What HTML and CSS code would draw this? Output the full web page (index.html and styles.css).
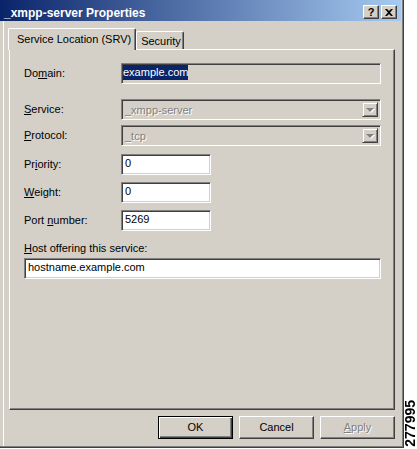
FILE: index.html
```html
<!DOCTYPE html>
<html>
<head>
<meta charset="utf-8">
<link rel="stylesheet" href="styles.css">
</head>
<body>
<div class="page">
  <div class="dialog">
    <div class="titlebar">
      <span class="title">_xmpp-server Properties</span>
      <div class="caption-btns">
        <span class="cbtn help">?</span>
        <span class="cbtn close">
          <svg width="8" height="7" viewBox="0 0 8 7"><path d="M0 0h2l2 2 2-2h2L5 3.5 8 7H6L4 5 2 7H0l3-3.5z" fill="#000"/></svg>
        </span>
      </div>
    </div>
    <div class="body">
      <div class="tabs">
        <div class="tab active">Service Location (SRV)</div>
        <div class="tab inactive">Security</div>
      </div>
      <div class="panel">
        <div class="row r-domain">
          <span class="label">Do<u>m</u>ain:</span>
          <div class="field wide readonly"><span class="sel">example.com</span></div>
        </div>
        <div class="row r-service">
          <span class="label"><u>S</u>ervice:</span>
          <div class="field wide combo disabled"><span class="ctext">_xmpp-server</span><span class="drop"><span class="arrow"></span></span></div>
        </div>
        <div class="row r-protocol">
          <span class="label"><u>P</u>rotocol:</span>
          <div class="field wide combo disabled"><span class="ctext">_tcp</span><span class="drop"><span class="arrow"></span></span></div>
        </div>
        <div class="row r-priority">
          <span class="label">Pr<u>i</u>ority:</span>
          <div class="field short edit">0</div>
        </div>
        <div class="row r-weight">
          <span class="label"><u>W</u>eight:</span>
          <div class="field short edit">0</div>
        </div>
        <div class="row r-port">
          <span class="label">Port <u>n</u>umber:</span>
          <div class="field short edit">5269</div>
        </div>
        <div class="host-label"><u>H</u>ost offering this service:</div>
        <div class="field host edit">hostname.example.com</div>
      </div>
      <div class="buttons">
        <div class="btn default">OK</div>
        <div class="btn">Cancel</div>
        <div class="btn disabled"><u>A</u>pply</div>
      </div>
    </div>
  </div>
  <div class="fignum"><span>277995</span></div>
</div>
</body>
</html>
```
FILE: styles.css
```css
html, body {
  margin: 0;
  background: #fff;
}
body {
  font-family: "Liberation Sans", Arial, sans-serif;
  font-size: 11px;
  color: #000;
}
.page {
  display: flex;
  width: 417px;
  height: 449px;
}
.dialog {
  width: 404px;
  height: 448px;
  box-sizing: border-box;
  background: #d4d0c8;
  display: flex;
  flex-direction: column;
  box-shadow: inset -1px -1px 0 #404040, inset -2px -2px 0 #808080, inset 3px 0 0 #d4d0c8, inset 4px 0 0 #fff;
}
.titlebar {
  height: 21px;
  margin-right: 3px;
  background: linear-gradient(to right, #0a246a, #a6caf0);
  display: flex;
  align-items: center;
  padding-left: 4px;
  box-sizing: border-box;
}
.title {
  color: #fff;
  font-weight: bold;
  font-size: 12px;
  line-height: 14px;
  padding-top: 5px;
}
.caption-btns {
  margin-left: auto;
  margin-right: 4px;
  display: flex;
  gap: 2px;
  padding-top: 3px;
}
.cbtn {
  width: 16px;
  height: 14px;
  box-sizing: border-box;
  background: #d4d0c8;
  border-top: 1px solid #fff;
  border-left: 1px solid #fff;
  border-right: 1px solid #404040;
  border-bottom: 1px solid #404040;
  box-shadow: inset -1px -1px 0 #808080;
  display: flex;
  align-items: center;
  justify-content: center;
  font-weight: bold;
  font-size: 11px;
  line-height: 12px;
}
.body {
  flex: 1;
  display: flex;
  flex-direction: column;
  padding: 0 9px;
}
.tabs {
  position: relative;
  z-index: 1;
  margin-top: 7px;
  margin-left: -1px;
  margin-bottom: -1px;
  height: 22px;
  display: flex;
  align-items: flex-end;
}
.tab {
  box-sizing: border-box;
  line-height: 13px;
  background: #d4d0c8;
  border-top: 1px solid #fff;
  border-left: 1px solid #fff;
  border-right: 1px solid #404040;
  box-shadow: inset -1px 0 0 #808080;
  border-radius: 2px 2px 0 0;
  white-space: nowrap;
}
.tab.active {
  height: 22px;
  padding: 4px 4px 0 8px;
}
.tab.inactive {
  height: 18px;
  padding: 3px 2px 0 4px;
  margin-bottom: 1px;
}
.panel {
  height: 361px;
  box-sizing: border-box;
  border-top: 1px solid #fff;
  border-left: 1px solid #fff;
  border-right: 1px solid #404040;
  border-bottom: 1px solid #404040;
  box-shadow: inset -1px -1px 0 #808080;
  padding-left: 14px;
  display: flex;
  flex-direction: column;
}
.row {
  display: flex;
  align-items: center;
  height: 21px;
}
.r-domain { margin-top: 13px; }
.r-service { margin-top: 15px; }
.r-protocol { margin-top: 5px; }
.r-priority { margin-top: 8px; }
.r-weight { margin-top: 7px; }
.r-port { margin-top: 7px; }
.label {
  width: 97px;
  line-height: 13px;
}
.field {
  box-sizing: border-box;
  height: 21px;
  border-top: 1px solid #808080;
  border-left: 1px solid #808080;
  border-right: 1px solid #fff;
  border-bottom: 1px solid #fff;
  box-shadow: inset 1px 1px 0 #404040, inset -1px -1px 0 #d4d0c8;
  white-space: nowrap;
}
.field.wide { width: 260px; }
.field.short { width: 90px; }
.field.host { width: 357px; margin-top: 3px; }
.field.edit {
  background: #fff;
  padding: 1px 2px 0 3px;
  line-height: 14px;
}
.field.readonly {
  background: #d4d0c8;
  padding: 1px 1px 0 1px;
}
.sel {
  display: inline-block;
  background: #0a246a;
  color: #fff;
  line-height: 15px;
}
.field.combo {
  display: flex;
  align-items: stretch;
  padding: 2px 2px 2px 2px;
}
.ctext {
  flex: 1;
  padding-left: 1px;
  line-height: 16px;
  color: #808080;
  text-shadow: 1px 1px 0 #fff;
}
.drop {
  width: 16px;
  box-sizing: border-box;
  background: #d4d0c8;
  border-top: 1px solid #d4d0c8;
  border-left: 1px solid #d4d0c8;
  border-right: 1px solid #404040;
  border-bottom: 1px solid #404040;
  box-shadow: inset 1px 1px 0 #fff, inset -1px -1px 0 #808080;
  display: flex;
  align-items: center;
  justify-content: center;
}
.arrow {
  width: 0;
  height: 0;
  border-left: 4px solid transparent;
  border-right: 4px solid transparent;
  border-top: 4px solid #808080;
  filter: drop-shadow(1px 1px 0 #fff);
  margin-top: 1px;
}
.host-label {
  margin-top: 11px;
  line-height: 13px;
}
.buttons {
  margin-top: 6px;
  display: flex;
  justify-content: flex-end;
  gap: 6px;
}
.btn {
  width: 75px;
  height: 23px;
  box-sizing: border-box;
  border-top: 1px solid #fff;
  border-left: 1px solid #fff;
  border-right: 1px solid #404040;
  border-bottom: 1px solid #404040;
  box-shadow: inset -1px -1px 0 #808080;
  display: flex;
  align-items: center;
  justify-content: center;
  line-height: 13px;
}
.btn.default {
  border: 1px solid #000;
  box-shadow: inset 1px 1px 0 #fff, inset -1px -1px 0 #404040, inset -2px -2px 0 #808080;
}
.btn.disabled {
  color: #808080;
  text-shadow: 1px 1px 0 #fff;
}
.fignum {
  width: 13px;
  display: flex;
  flex-direction: column;
  justify-content: flex-end;
  align-items: center;
  padding-bottom: 2px;
  box-sizing: border-box;
}
.fignum span {
  writing-mode: vertical-rl;
  transform: rotate(180deg);
  font-weight: bold;
  font-size: 14px;
  line-height: 13px;
}
```
